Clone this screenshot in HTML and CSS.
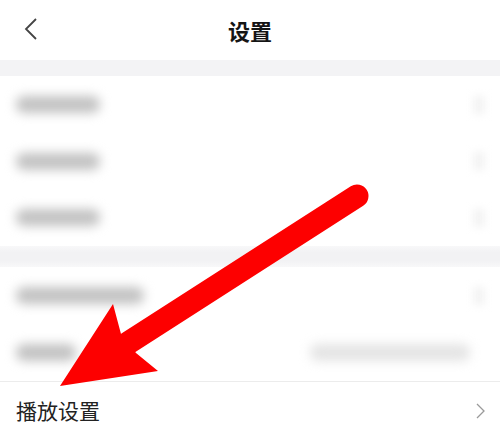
FILE: index.html
```html
<!DOCTYPE html>
<html lang="zh-CN">
<head>
<meta charset="utf-8">
<title>设置</title>
<link rel="stylesheet" href="styles.css">
</head>
<body>
<div class="page">
  <header class="nav">
    <svg class="back" viewBox="0 0 14 22" width="14" height="22"><polyline points="12,1 2,11 12,21" fill="none" stroke="#444" stroke-width="1.8"/></svg>
    <h1 class="title">设置</h1>
  </header>
  <div class="band band-top"></div>
  <section class="group">
    <div class="row r57"><span class="blur w84"></span><span class="blur-chev"></span></div>
    <div class="row r56"><span class="blur w84"></span><span class="blur-chev"></span></div>
    <div class="row r57"><span class="blur w84"></span><span class="blur-chev"></span></div>
  </section>
  <div class="band band-mid"></div>
  <section class="group">
    <div class="row r57"><span class="blur w128"></span><span class="blur-chev"></span></div>
    <div class="row r58 divided"><span class="blur w60"></span><span class="blur light w160"></span></div>
    <div class="row r57"><span class="label">播放设置</span>
      <svg class="chev" viewBox="0 0 9 16" width="9" height="16"><polyline points="1,1 8,8 1,15" fill="none" stroke="#9a9a9a" stroke-width="1.3"/></svg>
    </div>
  </section>
  <svg class="arrow" viewBox="0 0 500 428" width="500" height="428">
    <line x1="357" y1="196" x2="128" y2="343" stroke="#fd0000" stroke-width="23" stroke-linecap="round"/>
    <polygon points="60,386 113,304 121,334 136,353 158,371" fill="#fd0000"/>
  </svg>
</div>
</body>
</html>
```

FILE: styles.css
```css
html, body {
  margin: 0;
  padding: 0;
  background: #ffffff;
}
body {
  font-family: "Noto Sans CJK SC", "Noto Sans", sans-serif;
  width: 500px;
  height: 428px;
  overflow: hidden;
}
.page {
  position: relative;
  width: 500px;
  height: 428px;
  overflow: hidden;
}
.nav {
  height: 60px;
  display: flex;
  align-items: center;
  justify-content: center;
  position: relative;
  background: #fff;
}
.back {
  position: absolute;
  left: 24px;
  top: 18px;
}
.title {
  margin: 0;
  font-size: 22px;
  font-weight: 700;
  color: #151515;
  line-height: 1;
  margin-top: -1px;
}
.band {
  background: #f3f3f5;
}
.band-top { height: 16px; }
.band-mid {
  height: 21px;
  background: linear-gradient(#f8f8f9, #f2f2f4 30%, #f2f2f4 70%, #f8f8f9);
}
.group {
  display: flex;
  flex-direction: column;
  background: #fff;
}
.row {
  display: flex;
  align-items: center;
  justify-content: space-between;
  padding: 0 14px 0 16px;
  box-sizing: border-box;
}
.r56 { height: 56px; }
.r57 { height: 57px; }
.r58 { height: 58px; }
.divided {
  border-bottom: 1px solid #ececec;
}
.blur {
  display: block;
  height: 17px;
  background: #c2c2c2;
  border-radius: 8px;
  filter: blur(5.5px);
}
.blur.light {
  background: #e4e4e4;
  margin-right: 16px;
}
.w60 { width: 60px; }
.w84 { width: 84px; }
.w128 { width: 128px; }
.w160 { width: 160px; }
.blur-chev {
  display: block;
  width: 10px;
  height: 18px;
  background: #f1f1f1;
  filter: blur(4px);
  margin-right: 2px;
}
.label {
  font-size: 21px;
  color: #222;
  line-height: 1;
  margin-top: -1px;
}
.chev {
  margin-right: 1px;
  margin-top: 1px;
}
.arrow {
  position: absolute;
  left: 0;
  top: 0;
  pointer-events: none;
}
```
